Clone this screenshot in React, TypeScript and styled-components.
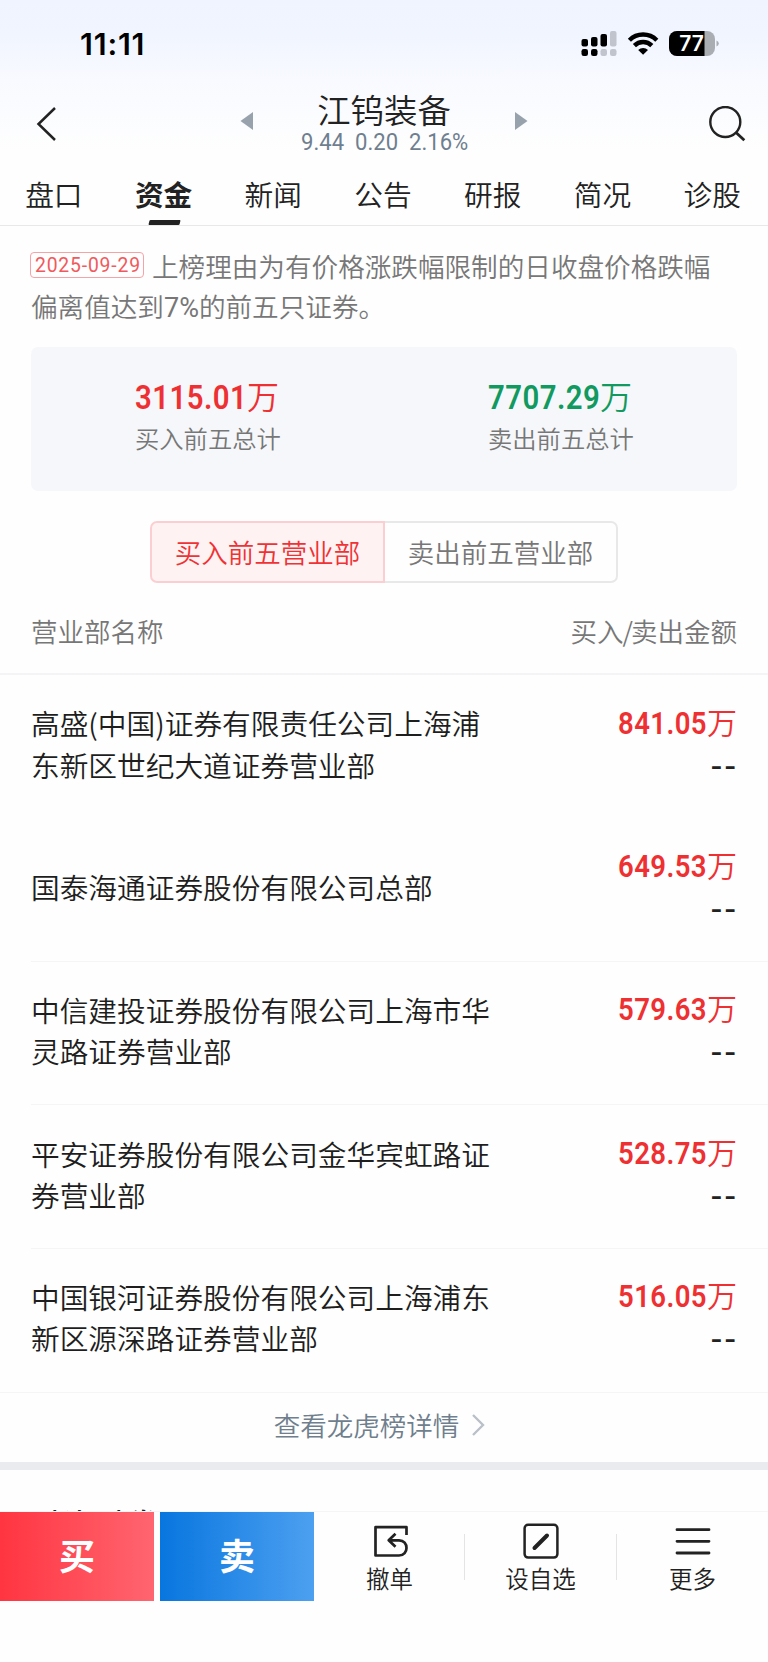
import React from "react";
import styled, { createGlobalStyle, css } from "styled-components";

const Global = createGlobalStyle`
  *{box-sizing:border-box}
  html,body{margin:0;padding:0;background:#fefefe}
  body{font-family:"Noto Sans CJK SC",sans-serif;color:#222;font-weight:350}
`;
const Screen = styled.div`
  width:768px;height:1662px;overflow:hidden;display:flex;flex-direction:column;background:#fefefe;
`;
const Top = styled.header`
  height:226px;flex:none;display:flex;flex-direction:column;
  background:linear-gradient(#f0f4ff 0,#f1f5ff 36px,#f8faff 80px,#fefefe 150px);
  border-bottom:1px solid #e8e8e8;
`;
const StatusBar = styled.div`
  height:88px;flex:none;display:flex;align-items:flex-start;justify-content:space-between;padding:26px 49px 0 80px;
`;
const Clock = styled.span`
  font:600 30.5px/36px Inter,sans-serif;color:#000;letter-spacing:0.8px;
`;
const StatusIcons = styled.svg`display:block;margin-top:2px;`;
const Nav = styled.div`
  height:76px;flex:none;display:grid;grid-template-columns:240px 288px 240px;
`;
const NavSide = styled.div<{ $end?: boolean }>`
  display:flex;padding:18px 20px 0 36px;justify-content:${p => (p.$end ? "flex-end" : "flex-start")};
`;
const NavCenter = styled.div`display:flex;justify-content:space-between;`;
const Arrow = styled.svg`display:block;margin-top:24px;`;
const TitleBox = styled.div`display:flex;flex-direction:column;align-items:center;`;
const Title = styled.h1`margin:0;font-size:33.4px;line-height:42px;font-weight:350;`;
/* Condensed figures: the box takes $width, the glyphs are narrowed by $scale. */
const Num = styled.span<{ $size: number; $width?: number; $scale?: number; $weight?: number; $track?: number }>`
  font-family:Roboto,sans-serif;white-space:pre;text-align:left;
  font-size:${p => p.$size}px;font-weight:${p => p.$weight ?? 400};letter-spacing:${p => p.$track ?? 0}px;
  ${p => p.$width && css`
    display:inline-block;width:${p.$width}px;transform:scaleX(${p.$scale ?? 1});transform-origin:left center;
  `}
`;
const Quote = styled.div`line-height:24px;color:#6f7f8f;`;
const Tabs = styled.nav`
  height:61px;display:grid;grid-template-columns:repeat(7,1fr);margin:0 1px 0 -1px;
`;
const Tab = styled.div<{ $on?: boolean }>`
  display:flex;flex-direction:column;align-items:center;
  font-size:28.7px;line-height:60px;font-weight:${p => (p.$on ? 700 : 350)};height:61px;
`;
const Mark = styled.i`width:31px;height:5px;background:#222;transform:skewX(-14deg);border-radius:1px;margin:-4px 0 0 2px;flex:none;`;
const Reason = styled.p`
  margin:0;padding:20px 50px 0 31px;height:121px;flex:none;font-size:26.6px;line-height:39.7px;color:#777;
`;
const Badge = styled.span`
  display:inline-flex;align-items:center;padding-left:4px;width:114px;height:26px;margin:0 8px 0 -1px;
  border:1px solid #f5a3a5;border-radius:4px;color:#f05a5d;vertical-align:5px;line-height:24px;
`;
const Card = styled.section`
  margin:0 31px;height:144px;flex:none;border-radius:7px;background:#f6f7fa;display:grid;grid-template-columns:1fr 1fr;justify-items:center;
`;
const Total = styled.div<{ $color: string }>`
  width:145px;padding-top:28px;white-space:nowrap;color:${p => p.$color};font-size:32px;line-height:40px;
`;
const Caption = styled.div`color:#777;font-size:24.3px;line-height:40px;`;
const Segments = styled.div`
  margin:30px auto 0;width:468px;height:62px;flex:none;display:flex;
`;
const Segment = styled.div<{ $on?: boolean }>`
  flex:1;display:flex;align-items:center;justify-content:center;font-size:26.5px;line-height:40px;border:2px solid;
  ${p => p.$on
    ? css`flex:0 0 235px;color:#ef3235;background:#fff2f3;border-color:#fbcfd1;border-radius:7px 0 0 7px;`
    : css`color:#777;border-color:#e8e8e9;border-left:0;border-radius:0 7px 7px 0;`}
`;
const ListHead = styled.div`
  height:92px;flex:none;display:flex;justify-content:space-between;padding:28px 31px 0;font-size:26.5px;line-height:40px;color:#777;
  border-bottom:2px solid #f4f4f6;
`;
const Row = styled.div<{ $line: boolean }>`
  height:143.4px;flex:none;margin-left:31px;padding-right:31px;display:flex;align-items:center;justify-content:space-between;
  border-bottom:1px solid ${p => (p.$line ? "#f5f5f6" : "transparent")};
`;
const Name = styled.div`font-size:28.7px;line-height:41.2px;width:466px;margin-top:-5px;color:#1e1e1e;`;
const Amounts = styled.div`text-align:right;white-space:nowrap;color:#ee3032;font-size:30px;line-height:43px;margin-top:-5px;`;
const Dash = styled.div`
  color:#222;display:flex;justify-content:flex-end;gap:2px;height:43px;padding:1px 1px 0 0;
  font:500 29px/43px Roboto,sans-serif;transform:scaleX(1.16);transform-origin:right center;
`;
const More = styled.div`
  height:70px;flex:none;display:flex;justify-content:center;align-items:center;gap:13px;padding:0 9px 4px 0;
  font-size:26.5px;line-height:40px;color:#6f7f8d;border-top:1px solid #f5f5f6;
`;
const Band = styled.div`height:8px;flex:none;background:#e9ebee;`;
const Next = styled.div`height:41px;flex:none;overflow:hidden;padding:31px 31px 0;font-size:32px;line-height:44px;font-weight:500;`;
const Bar = styled.footer`height:151px;flex:none;display:flex;border-top:1px solid #f5f5f5;background:#fefefe;`;
const Trade = styled.div<{ $bg: string }>`
  width:154px;height:89px;margin-right:6px;background:${p => p.$bg};color:#fff;font-size:36px;font-weight:700;line-height:84px;text-align:center;
`;
const Tool = styled.div<{ $w: number; $pad?: number }>`
  width:${p => p.$w}px;display:flex;flex-direction:column;align-items:center;padding:10px ${p => p.$pad ?? 0}px 0 0;
  font-size:23.5px;line-height:36px;height:89px;
`;
const Rule = styled.i`width:1px;height:46px;margin-top:22px;background:#e4e4e4;`;
const ToolIcon = styled.svg`display:block;flex:none;`;
const Slash = styled.span`margin:0 -2px 0 -1px;`;

const rows = [
  ["高盛(中国)证券有限责任公司上海浦东新区世纪大道证券营业部", "841.05"],
  ["国泰海通证券股份有限公司总部", "649.53"],
  ["中信建投证券股份有限公司上海市华灵路证券营业部", "579.63"],
  ["平安证券股份有限公司金华宾虹路证券营业部", "528.75"],
  ["中国银河证券股份有限公司上海浦东新区源深路证券营业部", "516.05"],
];
const tabs = ["盘口", "资金", "新闻", "公告", "研报", "简况", "诊股"];

export default function App() {
  return (
    <Screen>
      <Global />
      <Top>
        <StatusBar>
          <Clock>11:11</Clock>
          <StatusIcons width="139" height="30" viewBox="0 0 139 30">
            <g fill="#000">
              <rect x="1.5" y="11" width="6.5" height="7.5" rx="2" />
              <rect x="11" y="9" width="6.5" height="9.5" rx="2" />
              <rect x="20.5" y="6" width="6.5" height="12.5" rx="2" />
              <rect x="1.5" y="21" width="6.5" height="7" rx="2.2" />
              <rect x="11" y="21" width="6.5" height="7" rx="2.2" />
            </g>
            <g fill="#c1c4cc">
              <rect x="30" y="3" width="6.5" height="15.5" rx="2" />
              <rect x="20.5" y="21" width="6.5" height="7" rx="2.2" />
              <rect x="30" y="21" width="6.5" height="7" rx="2.2" />
            </g>
            <g fill="none" stroke="#000" strokeWidth="4.4">
              <path d="M49.4 12.2a19.4 19.4 0 0 1 27.4 0" />
              <path d="M54.4 17.6a12.3 12.3 0 0 1 17.4 0" />
            </g>
            <path d="M58.2 22a7 7 0 0 1 9.8 0L63.1 26.8Z" fill="#000" />
            <rect x="89" y="3" width="46" height="25" rx="8" fill="#aaadb2" />
            <path d="M97 3h27.5v25H97a8 8 0 0 1-8-8v-9a8 8 0 0 1 8-8Z" fill="#000" />
            <path d="M136.5 12.5q2.3 1 2.3 3t-2.3 3Z" fill="#aaadb2" />
            <text x="111.5" y="23" textAnchor="middle" fill="#fff" fontFamily="Inter,sans-serif" fontWeight="600" fontSize="21">77</text>
          </StatusIcons>
        </StatusBar>
        <Nav>
          <NavSide>
            <svg width="22" height="36" viewBox="0 0 22 36" fill="none" stroke="#222" strokeWidth="2.5"><path d="M19 2 2.5 18 19 34" /></svg>
          </NavSide>
          <NavCenter>
            <Arrow width="13" height="18"><path d="M0.5 9 13 0v18Z" fill="#98a2ad" /></Arrow>
            <TitleBox>
              <Title>江钨装备</Title>
              <Quote><Num $size={24} $width={167} $scale={0.92}>{"9.44  0.20  2.16%"}</Num></Quote>
            </TitleBox>
            <Arrow width="13" height="18"><path d="M12.5 9 0 0v18Z" fill="#98a2ad" /></Arrow>
          </NavCenter>
          <NavSide $end>
            <svg width="40" height="38" viewBox="0 0 40 38" fill="none" stroke="#222" strokeWidth="2.4"><circle cx="17.3" cy="16" r="15" /><path d="m28 26.5 8.3 7.8" strokeWidth="2.8" /></svg>
          </NavSide>
        </Nav>
        <Tabs>
          {tabs.map((t, i) => (
            <Tab key={t} $on={i === 1}>{t}{i === 1 && <Mark />}</Tab>
          ))}
        </Tabs>
      </Top>
      <Reason>
        <Badge><Num $size={21} $width={106} $scale={0.92} $track={0.9}>2025-09-29</Num></Badge>上榜理由为有价格涨跌幅限制的日收盘价格跌幅偏离值达到<Num $size={27}>7%</Num>的前五只证券。
      </Reason>
      <Card>
        <Total $color="#ee3032"><Num $size={33} $weight={600} $width={112} $scale={0.89} $track={0.5}>3115.01</Num>万<Caption>买入前五总计</Caption></Total>
        <Total $color="#119a60"><Num $size={33} $weight={600} $width={112} $scale={0.89} $track={0.5}>7707.29</Num>万<Caption>卖出前五总计</Caption></Total>
      </Card>
      <Segments>
        <Segment $on>买入前五营业部</Segment>
        <Segment>卖出前五营业部</Segment>
      </Segments>
      <ListHead><span>营业部名称</span><span>买入<Slash>/</Slash>卖出金额</span></ListHead>
      {rows.map(([name, amount], i) => (
        <Row key={name} $line={i > 0 && i < 4}>
          <Name>{name}</Name>
          <Amounts><Num $size={32} $weight={600} $width={89} $scale={0.86} $track={0.5}>{amount}</Num>万<Dash><span>-</span><span>-</span></Dash></Amounts>
        </Row>
      ))}
      <More>
        查看龙虎榜详情
        <svg width="13" height="24" viewBox="0 0 13 24" fill="none" stroke="#b9c0c8" strokeWidth="2.4"><path d="m1 2 10 10L1 22" /></svg>
      </More>
      <Band />
      <Next>融资融券</Next>
      <Bar>
        <Trade $bg="linear-gradient(90deg,#ff3541,#ff6570)">买</Trade>
        <Trade $bg="linear-gradient(90deg,#0876df,#4da0f0)">卖</Trade>
        <Tool $w={144} $pad={5}>
          <ToolIcon width="38" height="38" viewBox="0 0 38 38" fill="none" stroke="#222" strokeWidth="2.7"><path d="M35.5 13V5.2H4.5v28.3H28c10 0 10-15.2 0-15.2H18M24.5 11.8l-6.8 6.5 6.8 6.5" strokeLinejoin="round" /></ToolIcon>
          撤单
        </Tool>
        <Rule />
        <Tool $w={151}>
          <ToolIcon width="38" height="38" viewBox="0 0 38 38" fill="none" stroke="#222" strokeWidth="2.5"><rect x="2.6" y="2.8" width="32.8" height="32.8" rx="3.5" /><path d="m12.5 26 12.5-12.5" strokeWidth="4" strokeLinecap="round" /></ToolIcon>
          设自选
        </Tool>
        <Rule />
        <Tool $w={151}>
          <ToolIcon width="38" height="38" viewBox="0 0 38 38" fill="none" stroke="#222" strokeWidth="2.8" strokeLinecap="round"><path d="M3 7.7h32M3 19.3h32M3 31h32" /></ToolIcon>
          更多
        </Tool>
      </Bar>
    </Screen>
  );
}
